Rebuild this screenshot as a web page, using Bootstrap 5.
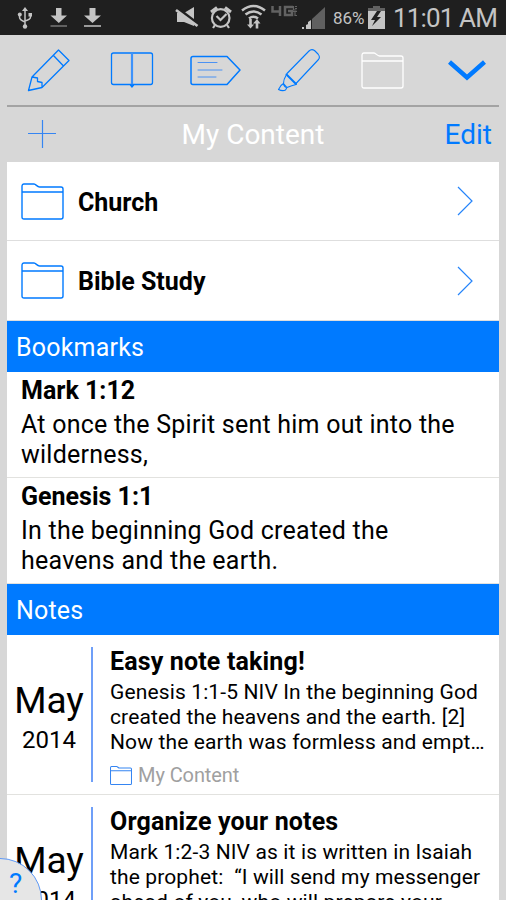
<!DOCTYPE html>
<html lang="en">
<head>
<meta charset="utf-8">
<meta name="viewport" content="width=device-width, initial-scale=1">
<title>My Content</title>
<link href="https://cdn.jsdelivr.net/npm/bootstrap@5.3.0/dist/css/bootstrap.min.css" rel="stylesheet">
<style>
:root{--accent:#007aff}
html,body{height:900px;overflow:hidden}
body{font-family:Roboto,"Liberation Sans",sans-serif;background:#d7d7d7;color:#000;line-height:1}
svg{display:block;flex:none;fill:none}
.status{height:35px;background:#1f1f1f;color:#c4c4c4}
.status .pct{font-size:17px;width:32px;margin-left:8px;margin-right:3px;padding-top:1px}
.status .clock{font-size:26px;width:106px;margin-left:8px;letter-spacing:-.85px}
.frame{width:492px;height:865px;margin-left:7px;overflow:hidden}
.tools{height:72px;border-bottom:2px solid #a3a3a3}
.titlebar{height:55px;font-size:28px;display:grid;grid-template-columns:1fr auto 1fr;padding-top:1px}
.titlebar .edit{color:var(--accent);padding-right:7px}
.folder{height:79px;border-bottom:1px solid #dedede;padding:0 26px 0 14px;font-size:25px;font-weight:700}
.folder span{padding:2px 0 0 14px}
.folder + .folder{height:80px}
.section-bar{height:51px;background:var(--accent);color:#fff;font-size:25px;padding:2px 0 0 9px;letter-spacing:.2px}
.verse{height:106px;border-bottom:1px solid #e2e2df;padding:4px 14px 0;font-size:25px;line-height:30px}
.verse strong,.note strong{display:block;font-weight:700}
.verse p{margin:4px 0 0;letter-spacing:.23px}
.note{height:160px;border-bottom:1px solid #e2e2df;padding-top:12px}
.date{width:84px;padding-top:35px;text-align:center}
.month{font-size:37px;line-height:38px}
.year{font-size:24px;line-height:40px}
.rule{width:2px;height:135px;background:#6f9ff8}
.words{padding:1px 0 0 17px}
.words strong{font-size:25px;line-height:28px;letter-spacing:.15px}
.words p{font-size:21px;line-height:25px;margin:4px 0 0;white-space:pre;letter-spacing:.13px}
.place{color:#a0a0a0;font-size:20px;margin-top:10px;gap:6px;letter-spacing:-.08px}
.help{left:-42px;top:858px;width:84px;height:84px;border:1px solid #5d98f5;background:#e6e6e6;color:var(--accent);font-size:28px;padding:11px 0 0 50px}
</style>
</head>
<body class="position-relative">
<svg width="0" height="0" class="position-absolute"><defs>
<symbol id="folder" viewBox="0 0 43 37"><path d="M1 34V3.500Q1 1 3 1h10c2 0 3 3 5.500 3H40q2 0 2 2v28q0 2-2 2H3q-2 0-2-2zM1 9h41"/></symbol>
</defs></svg>
<header class="status d-flex align-items-center">
<svg width="325" height="35" viewBox="0 0 325 35">
<g stroke="#c4c4c4" stroke-width="1.500"><path d="M25 9v17M19.500 15v2q0 3 5.500 5M30.500 15v2q0 2.500-5.500 4"/><g fill="#c4c4c4" stroke="none"><path d="M22 11l3-4 3 4z"/><circle cx="25" cy="26.500" r="2.200"/><circle cx="19.800" cy="14.500" r="2"/><path d="M28.500 13h3.500v3.500h-3.500z"/></g></g>
<path fill="#c4c4c4" d="M56 8h5.500v7.500H67L58.800 23 50.500 15.500H56zM89.500 8h6v7.500h5.500L92.500 23 84 15.500h5.500z"/><path d="M50.500 26h16.500" stroke="#777" stroke-width="1.500"/><path d="M84 26h17" stroke="#c4c4c4" stroke-width="1.500"/>
<path fill="#c4c4c4" d="M177 13h7l10-6v19l-10-4h-7z"/><path d="M177 8l21 16" stroke="#1f1f1f" stroke-width="3"/><path d="M176 10l21.500 16" stroke="#c4c4c4" stroke-width="2.800"/>
<g stroke="#c4c4c4" stroke-width="2.200"><circle cx="220.700" cy="18" r="8.800"/><path d="M216.500 16l4 4 6-6M215 25l-2 3M227 25l2 3"/><path d="M211 12l6-4.500M231 12l-6-4.500" stroke-width="3"/></g>
<g stroke="#c4c4c4" stroke-width="2.500"><path d="M242 10.500q11.500-9 23 0M245.500 14.500q8-6 16 0M249 18.500q4.500-3.500 9 0"/></g><path fill="#c4c4c4" d="M247 24.500l3.500 4 3.500-4h-2.200V19h-2.600v5.500zM253 23.500l4-4.500 3.500 4.500h-2.200v5h-2.600v-5z"/>
<g stroke="#626262" stroke-width="2.500"><path d="M272.500 6v5.500h8.500M280 6v10M293 7h-8v8h7v-4h-4"/></g><g stroke="#626262" stroke-width="1.200"><path d="M293.500 6v4h3M293 11.500h4M295 12v4M297 6.500h-2M297 8.500h-2M297 15.500h-2"/></g>
<path fill="#606060" d="M325 7v22h-13V19z"/><path fill="#c4c4c4" d="M302 29h2v-2h-2zM306 29h2v-5l-2 1zM311 29V20l-3 2v7z"/>
</svg>
<span class="pct">86%</span>
<svg width="17" height="35" viewBox="0 0 17 35"><path fill="#626262" d="M0 8h5V6h7v2h5v4H0z"/><path fill="#c4c4c4" d="M0 11h17v18H0z"/><path fill="#1f1f1f" d="M9 11l-6 9h4l-3 6 9-9H9l4-6z"/></svg>
<span class="clock text-nowrap">11:01 AM</span>
</header>
<main class="frame">
<nav class="tools">
<svg width="492" height="70" viewBox="7 35 492 70" stroke="#007aff" stroke-width="1.300" stroke-linejoin="round" stroke-linecap="round">
<path d="M58.500 50l10.500 10.500-27 27-13.500 3 3.500-13.500zM53.500 55.500l10 10.500M32 77l5.500 1v3.500l4.500 1v5"/>
<rect x="111.500" y="53" width="41" height="31.500" rx="2"/><path d="M132 53.500v31.500" stroke-width="2.200" stroke="#3d92fa"/><path d="M130.500 85l1.500 2 1.500-2z" fill="#007aff"/>
<path d="M193 56.500h34L240 70l-13 14.500h-34q-2 0-2-2v-24q0-2 2-2z" stroke-width="1.500"/><path d="M198 62.500h19M198 70h24M198 77h18" stroke-width="1" stroke="#4b92f3"/>
<path d="M287 73.500l22-22.500q2.500-2.500 5.500-.5l3.500 3.500q2.500 3 .5 5.500L296 83.500" stroke-width="1.100"/><path d="M286.500 74.500l9.500 9.500" stroke-width="2"/><path d="M286 75.500q-2.500 4-2.500 8l3.500 4q5-2 9-3M283.500 83.500l-2.500 2-2.500 4q4 2 7 .5l1.500-2.500q-3 0-3.500-4" stroke-width="1.100"/>
<g transform="translate(361 52)" stroke="#fff"><use href="#folder" width="43" height="37"/></g>
<path d="M449.500 62l17.500 15.500L484.500 62" stroke-width="4.500" stroke-linecap="butt" stroke-linejoin="miter"/>
</svg>
</nav>
<div class="titlebar align-items-center">
<svg class="ms-3" width="38" height="30" viewBox="0 0 38 30" stroke="#3585f2" stroke-width="1.200"><path d="M5 13.500h28M19.500 0v28"/></svg>
<span class="text-white">My Content</span><span class="edit text-end">Edit</span>
</div>
<section class="bg-white">
<div class="folder d-flex align-items-center"><svg width="43" height="37" stroke="#007aff" stroke-width="1.400"><use href="#folder"/></svg><span>Church</span><svg class="ms-auto" width="16" height="30" stroke="#2584fa" stroke-width="1.200"><path d="M1 1l14 14L1 29"/></svg></div>
<div class="folder d-flex align-items-center"><svg width="43" height="37" stroke="#007aff" stroke-width="1.400"><use href="#folder"/></svg><span>Bible Study</span><svg class="ms-auto" width="16" height="30" stroke="#2584fa" stroke-width="1.200"><path d="M1 1l14 14L1 29"/></svg></div>
<div class="section-bar d-flex align-items-center">Bookmarks</div>
<article class="verse"><strong>Mark 1:12</strong><p>At once the Spirit sent him out into the<br>wilderness,</p></article>
<article class="verse"><strong>Genesis 1:1</strong><p>In the beginning God created the<br>heavens and the earth.</p></article>
<div class="section-bar d-flex align-items-center">Notes</div>
<article class="note d-flex align-items-start"><div class="date"><div class="month">May</div><div class="year">2014</div></div><div class="rule"></div><div class="words"><strong>Easy note taking!</strong><p>Genesis 1:1-5 NIV In the beginning God
created the heavens and the earth. [2]
Now the earth was formless and empt…</p><div class="place d-flex align-items-center"><svg width="22" height="19" stroke="#3585f2" stroke-width="2"><use href="#folder"/></svg>My Content</div></div></article>
<article class="note d-flex align-items-start"><div class="date"><div class="month">May</div><div class="year">2014</div></div><div class="rule"></div><div class="words"><strong>Organize your notes</strong><p>Mark 1:2-3 NIV as it is written in Isaiah
the prophet:  “I will send my messenger
ahead of you, who will prepare your</p></div></article>
</section>
</main>
<div class="help position-absolute rounded-circle">?</div>
<script src="https://cdn.jsdelivr.net/npm/bootstrap@5.3.0/dist/js/bootstrap.bundle.min.js"></script>
</body>
</html>
